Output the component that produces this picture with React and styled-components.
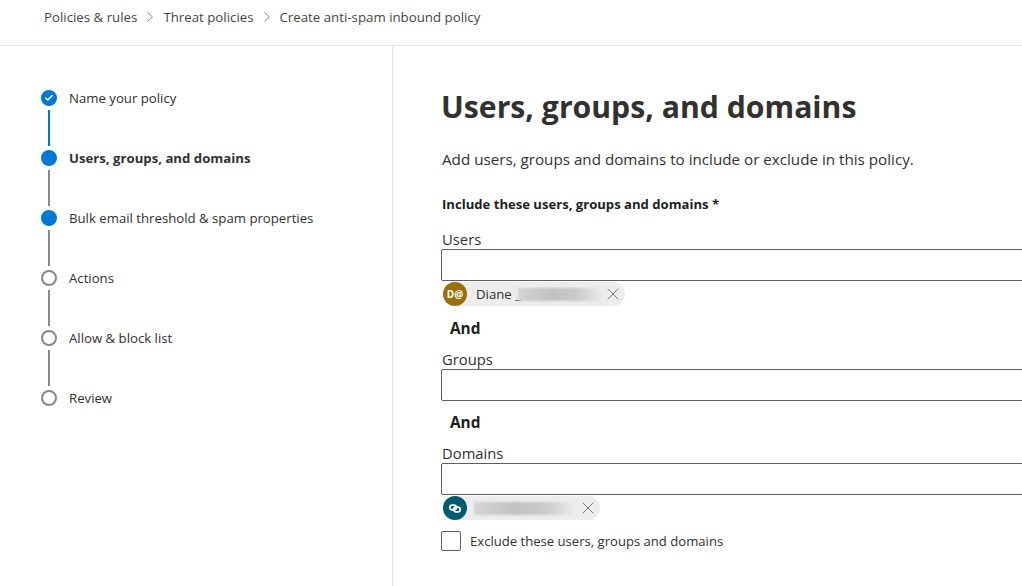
import React from "react";
import styled, { createGlobalStyle } from "styled-components";
import { Check, X } from "lucide-react";

const GlobalStyle = createGlobalStyle`
  html, body {
    margin: 0;
    height: 100%;
    overflow: hidden;
    background: #fff;
  }
  body {
    font-family: "Open Sans", "Noto Sans", sans-serif;
    color: #323130;
  }
`;

const Page = styled.div`
  width: 1022px;
  height: 586px;
  display: flex;
  flex-direction: column;
  overflow: hidden;
`;

const Breadcrumb = styled.nav`
  height: 46px;
  flex: none;
  box-sizing: border-box;
  border-bottom: 1px solid #e6e6e6;
  display: flex;
  align-items: center;
  padding: 0 0 11px 44px;
  font-size: 13.28px;
  color: #484644;
`;

const Sep = styled.svg`
  width: 8px;
  height: 12px;
  margin: 0 9px 0 9px;
  fill: none;
  stroke: #8a8886;
  stroke-width: 1;
`;

const Body = styled.div`
  flex: 1;
  display: flex;
  min-height: 0;
`;

const Side = styled.aside`
  width: 393px;
  flex: none;
  box-sizing: border-box;
  border-right: 1px solid #e6e6e6;
  padding: 44px 0 0 41px;
`;

const Step = styled.div`
  display: flex;
  gap: 12px;
  height: 60px;
`;

const Marker = styled.div`
  width: 16px;
  display: flex;
  flex-direction: column;
  align-items: center;
`;

const Dot = styled.div`
  width: 16px;
  height: 16px;
  flex: none;
  box-sizing: border-box;
  border-radius: 50%;
  display: flex;
  align-items: center;
  justify-content: center;
  background: ${(p) => (p.$on ? "#0078d4" : "#fff")};
  border: 2px solid ${(p) => (p.$on ? "#0078d4" : "#8a8886")};
  color: #fff;
`;

const Line = styled.div`
  width: 2px;
  height: 36px;
  margin-top: 4px;
  background: ${(p) => (p.$on ? "#0078d4" : "#8a8886")};
`;

const StepLabel = styled.span`
  font-size: 13.2px;
  line-height: 17px;
  font-weight: ${(p) => (p.$bold ? 700 : 400)};
  color: #323130;
`;

const Main = styled.main`
  flex: 1;
  min-width: 0;
  padding: 40px 0 0 48px;
`;

const Title = styled.h1`
  margin: 0;
  font-size: 30.2px;
  line-height: 42px;
  font-weight: 700;
  color: #323130;
`;

const Intro = styled.p`
  margin: 20px 0 0 1px;
  font-size: 15.2px;
  line-height: 22px;
  color: #323130;
`;

const Section = styled.h2`
  margin: 25px 0 0 1px;
  font-size: 13.1px;
  line-height: 18px;
  font-weight: 700;
  color: #201f1e;
`;

const FieldLabel = styled.label`
  display: block;
  margin: ${(p) => p.$top}px 0 0 1px;
  font-size: 14.8px;
  line-height: 19px;
  color: #323130;
`;

const Input = styled.div`
  width: 640px;
  height: 32px;
  box-sizing: border-box;
  border: 1px solid #605e5c;
  border-radius: 2px;
  background: #fff;
`;

const ChipRow = styled.div`
  display: flex;
  height: 25px;
`;

const Chip = styled.div`
  display: inline-flex;
  align-items: center;
  height: 24px;
  margin: 1px 0 0 2px;
  background: #ededed;
  border-radius: 12px;
  font-size: 13.2px;
  color: #323130;
`;

const Avatar = styled.div`
  width: 24px;
  height: 24px;
  border-radius: 50%;
  flex: none;
  display: flex;
  align-items: center;
  justify-content: center;
  background: ${(p) => p.$bg};
  color: #fff;
  font-size: 10px;
  font-weight: 700;
`;

const ChipName = styled.span`
  margin-left: 9px;
  line-height: 24px;
`;

const Redacted = styled.span`
  display: block;
  width: ${(p) => p.$w}px;
  height: 13px;
  margin: 0 ${(p) => p.$mr}px 0 ${(p) => p.$ml}px;
  background: linear-gradient(90deg, #d4d4d4, #c2c2c2 40%, #cacaca 70%, #ececec);
  filter: blur(0.8px);
`;

const ChipClose = styled.span`
  display: flex;
  margin-right: 2px;
  color: #605e5c;
`;

const Conj = styled.div`
  margin: ${(p) => p.$top}px 0 0 9px;
  font-size: 15.4px;
  line-height: 20px;
  font-weight: 700;
  color: #201f1e;
`;

const CheckRow = styled.label`
  display: flex;
  align-items: center;
  gap: 9px;
  margin-top: 11px;
  font-size: 13.1px;
  color: #323130;
`;

const CheckBox = styled.span`
  width: 20px;
  height: 20px;
  box-sizing: border-box;
  border: 1px solid #605e5c;
  border-radius: 2px;
`;

const steps = [
  { label: "Name your policy", on: true, done: true, line: true },
  { label: "Users, groups, and domains", on: true, bold: true },
  { label: "Bulk email threshold & spam properties", on: true },
  { label: "Actions" },
  { label: "Allow & block list" },
  { label: "Review", last: true },
];

const Chevron = () => (
  <Sep viewBox="0 0 8 12">
    <path d="M1.5 1.5 L6.5 6 L1.5 10.5" />
  </Sep>
);

const ChainIcon = () => (
  <svg width="12" height="9" viewBox="0 0 14 10" fill="none" stroke="currentColor" strokeWidth="2">
    <rect x="1" y="1" width="7.5" height="5.5" rx="2.75" />
    <rect x="5.5" y="3.5" width="7.5" height="5.5" rx="2.75" />
  </svg>
);

export default function App() {
  return (
    <Page>
      <GlobalStyle />
      <Breadcrumb>
        <span>Policies &amp; rules</span>
        <Chevron />
        <span>Threat policies</span>
        <Chevron />
        <span>Create anti-spam inbound policy</span>
      </Breadcrumb>
      <Body>
        <Side>
          {steps.map((s) => (
            <Step key={s.label}>
              <Marker>
                <Dot $on={s.on}>
                  {s.done && <Check size={10} strokeWidth={3.5} />}
                </Dot>
                {!s.last && <Line $on={s.line} />}
              </Marker>
              <StepLabel $bold={s.bold}>{s.label}</StepLabel>
            </Step>
          ))}
        </Side>
        <Main>
          <Title>Users, groups, and domains</Title>
          <Intro>Add users, groups and domains to include or exclude in this policy.</Intro>
          <Section>Include these users, groups and domains *</Section>
          <FieldLabel $top={17}>Users</FieldLabel>
          <Input />
          <ChipRow>
            <Chip>
              <Avatar $bg="#986f0b">D@</Avatar>
              <ChipName>Diane _</ChipName>
              <Redacted $w={85} $ml={-3} $mr={0} />
              <ChipClose>
                <X size={20} strokeWidth={1} />
              </ChipClose>
            </Chip>
          </ChipRow>
          <Conj $top={13}>And</Conj>
          <FieldLabel $top={11}>Groups</FieldLabel>
          <Input />
          <Conj $top={12}>And</Conj>
          <FieldLabel $top={11}>Domains</FieldLabel>
          <Input />
          <ChipRow>
            <Chip>
              <Avatar $bg="#005b70">
                <ChainIcon />
              </Avatar>
              <Redacted $w={101} $ml={7} $mr={3} />
              <ChipClose>
                <X size={20} strokeWidth={1} />
              </ChipClose>
            </Chip>
          </ChipRow>
          <CheckRow>
            <CheckBox />
            Exclude these users, groups and domains
          </CheckRow>
        </Main>
      </Body>
    </Page>
  );
}
